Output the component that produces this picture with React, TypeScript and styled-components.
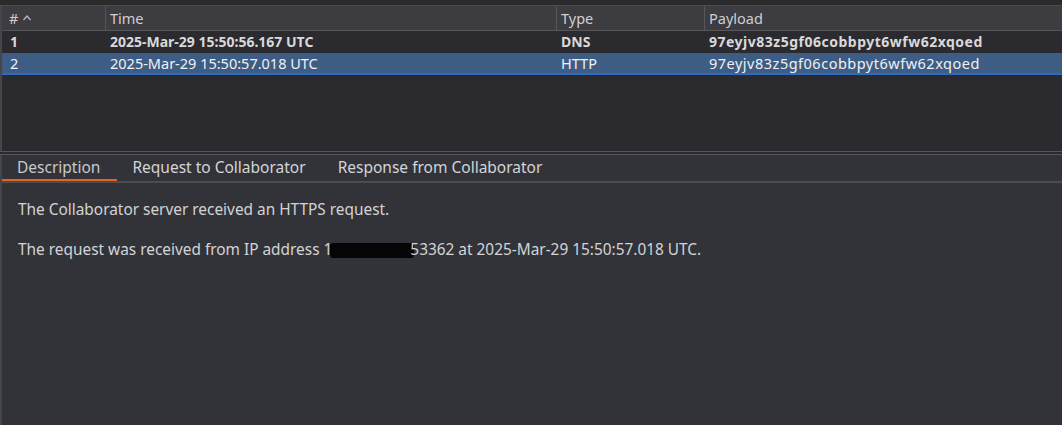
import React from 'react';
import styled, { createGlobalStyle } from 'styled-components';

const GlobalStyle = createGlobalStyle`
  html, body {
    margin: 0;
    padding: 0;
    background: #2b2b2e;
  }
  body {
    font-family: "Noto Sans", "Open Sans", sans-serif;
    color: #d9d9db;
  }
`;

const Page = styled.div`
  width: 1062px;
  height: 425px;
  display: flex;
  flex-direction: column;
  background: #2b2b2e;
  overflow: hidden;
`;

const TopStrip = styled.div`
  height: 5px;
  background: #2b2b2e;
  border-bottom: 1px solid #4a4a4f;
`;

const TablePane = styled.div`
  height: 145px;
  display: flex;
  flex-direction: column;
  background: #2b2a2e;
  border-left: 2px solid #45454a;
`;

const grid = `
  display: grid;
  grid-template-columns: 103px 451px 148px 1fr;
`;

const HeaderRow = styled.div`
  ${grid}
  height: 24px;
  background: #3c3c41;
  border-bottom: 1px solid #55555a;
`;

const HeaderCell = styled.div`
  display: flex;
  align-items: center;
  gap: 4px;
  padding-left: 4px;
  font-size: 14.5px;
  color: #cfcfd2;
  &:first-child {
    padding-left: 7px;
  }
  & + & {
    border-left: 1px solid #55555a;
  }
`;

const Row = styled.div<{ $selected?: boolean; $bold?: boolean }>`
  ${grid}
  height: 22px;
  box-sizing: border-box;
  background: ${({ $selected }) => ($selected ? '#3e5d84' : 'transparent')};
  border-bottom: 2px solid ${({ $selected }) => ($selected ? '#2f6cc0' : 'transparent')};
  font-weight: ${({ $bold }) => ($bold ? 700 : 400)};
  font-size: ${({ $bold }) => ($bold ? '14px' : '14.5px')};
  color: ${({ $selected }) => ($selected ? '#eef1f6' : '#d9d9db')};
`;

const Cell = styled.div<{ $spaced?: boolean }>`
  display: flex;
  align-items: center;
  padding-left: 5px;
  white-space: nowrap;
  overflow: hidden;
  letter-spacing: ${({ $spaced }) => ($spaced ? '0.5px' : '0')};
  &:first-child {
    padding-left: 8px;
  }
`;

const Divider = styled.div`
  height: 2px;
  background: #2b2b2e;
  border-top: 1px solid #55555a;
  border-bottom: 1px solid #55555a;
`;

const DetailPane = styled.div`
  flex: 1;
  display: flex;
  flex-direction: column;
  background: #323338;
  border-left: 2px solid #45454a;
`;

const TabBar = styled.div`
  display: flex;
  height: 26px;
  border-bottom: 2px solid #4b4c51;
`;

const Tab = styled.div<{ $active?: boolean }>`
  display: flex;
  align-items: center;
  padding: 0 17px 2px 15px;
  font-size: 15.5px;
  color: ${({ $active }) => ($active ? '#c8c8cc' : '#d4d4d7')};
  box-shadow: ${({ $active }) => ($active ? 'inset 0 -2px 0 #e5631c' : 'none')};
`;

const Content = styled.div`
  padding: 17px 16px;
  display: flex;
  flex-direction: column;
  gap: 20px;
  font-size: 15.4px;
  color: #d3d3d6;
`;

const Line = styled.div`
  line-height: 20px;
  white-space: nowrap;
`;

const Redacted = styled.span`
  display: inline-block;
  width: 84px;
  height: 15px;
  margin: 0 -4px 0 -2px;
  vertical-align: -3px;
  background: #050505;
  border-radius: 3px;
`;

const SortCaret = () => (
  <svg width="10" height="8" viewBox="0 0 10 8" fill="none" stroke="#bdbdc1" strokeWidth="1.2">
    <polyline points="1.5,6 5,2 8.5,6" />
  </svg>
);

const rows = [
  { id: 1, time: '2025-Mar-29 15:50:56.167 UTC', type: 'DNS', payload: '97eyjv83z5gf06cobbpyt6wfw62xqoed', bold: true },
  { id: 2, time: '2025-Mar-29 15:50:57.018 UTC', type: 'HTTP', payload: '97eyjv83z5gf06cobbpyt6wfw62xqoed', selected: true },
];

const App: React.FC = () => (
  <Page>
    <GlobalStyle />
    <TopStrip />
    <TablePane>
      <HeaderRow>
        <HeaderCell>
          # <SortCaret />
        </HeaderCell>
        <HeaderCell>Time</HeaderCell>
        <HeaderCell>Type</HeaderCell>
        <HeaderCell>Payload</HeaderCell>
      </HeaderRow>
      {rows.map((r) => (
        <Row key={r.id} $bold={r.bold} $selected={r.selected}>
          <Cell>{r.id}</Cell>
          <Cell>{r.time}</Cell>
          <Cell>{r.type}</Cell>
          <Cell $spaced>{r.payload}</Cell>
        </Row>
      ))}
    </TablePane>
    <Divider />
    <DetailPane>
      <TabBar>
        <Tab $active>Description</Tab>
        <Tab>Request to Collaborator</Tab>
        <Tab>Response from Collaborator</Tab>
      </TabBar>
      <Content>
        <Line>The Collaborator server received an HTTPS request.</Line>
        <Line>
          The request was received from IP address 1<Redacted />53362 at 2025-Mar-29 15:50:57.018 UTC.
        </Line>
      </Content>
    </DetailPane>
  </Page>
);

export default App;
